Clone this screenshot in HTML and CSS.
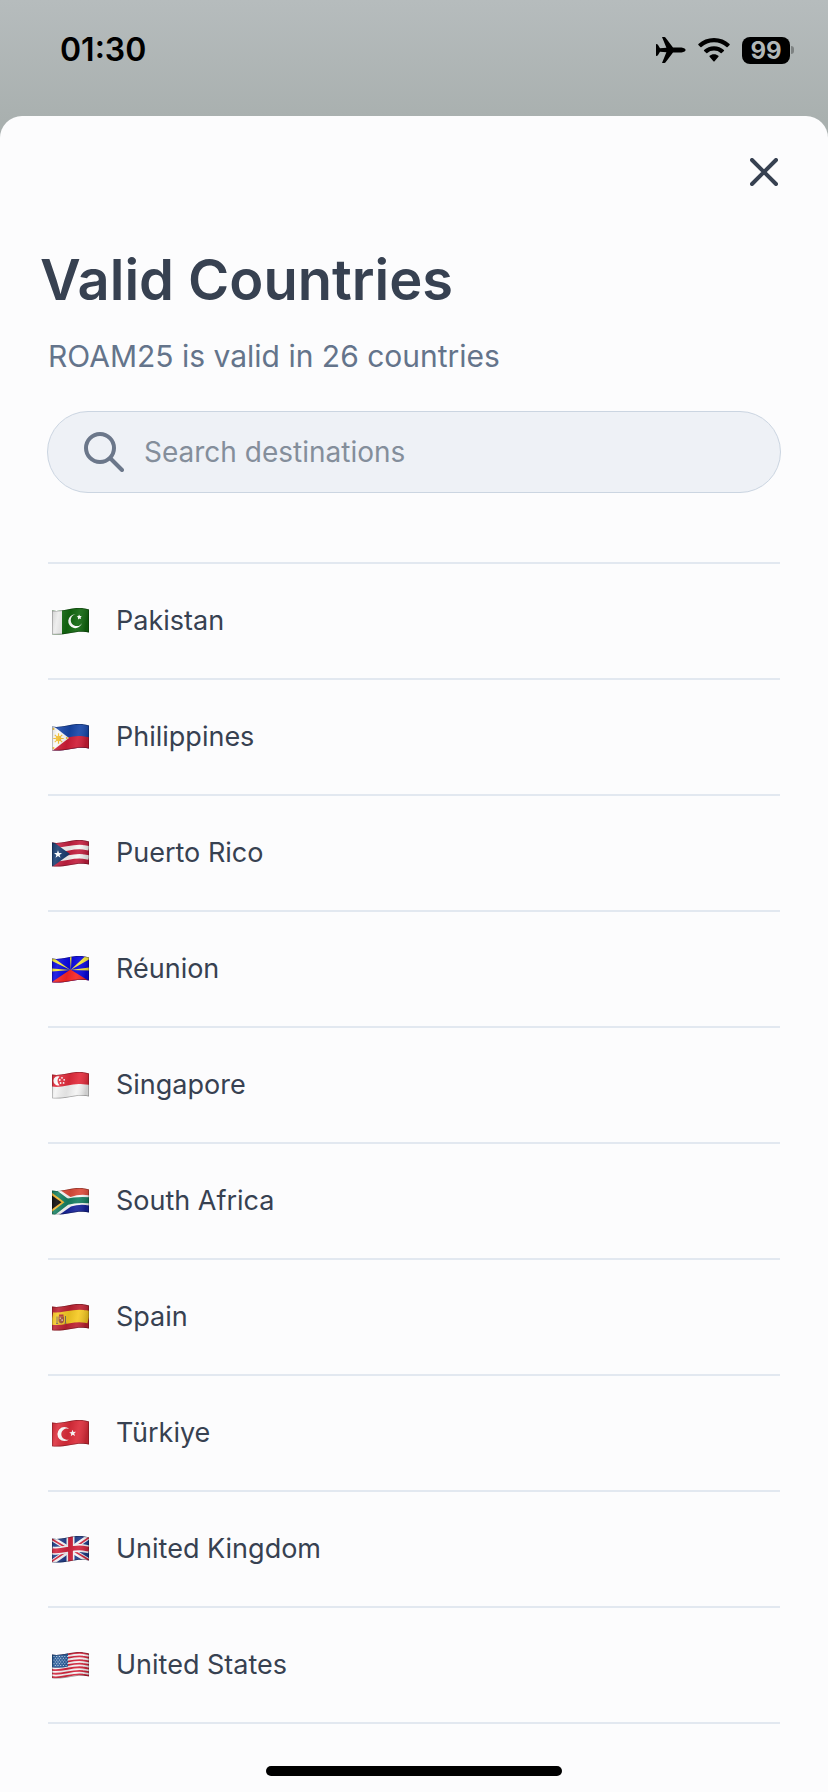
FILE: index.html
```html
<!DOCTYPE html>
<html lang="en">
<head>
<meta charset="utf-8">
<meta name="viewport" content="width=device-width, initial-scale=1">
<title>Valid Countries</title>
<link rel="stylesheet" href="styles.css">
</head>
<body>
<svg class="defs" aria-hidden="true">
  <defs>
    <clipPath id="wave"><path d="M0 2.5C10 4.5 20-1.5 31 .2Q34 .5 37 1.5V24.5Q34 23.8 31 23.7C20 23.5 12 27.5 0 26.3Z"/></clipPath>
    <linearGradient id="shade" x1="0" x2="1" y1="0" y2="0.15">
      <stop offset="0" stop-color="#000" stop-opacity=".12"/>
      <stop offset=".2" stop-color="#fff" stop-opacity=".12"/>
      <stop offset=".5" stop-color="#000" stop-opacity=".08"/>
      <stop offset=".75" stop-color="#fff" stop-opacity=".08"/>
      <stop offset="1" stop-color="#000" stop-opacity=".16"/>
    </linearGradient>
    <g id="finish">
      <path fill="url(#shade)" d="M0 0H37V27H0Z"/>
      <path fill="none" stroke="#000" stroke-opacity=".3" stroke-width="1.4" d="M0 2.5C10 4.5 20-1.5 31 .2Q34 .5 37 1.5V24.5Q34 23.8 31 23.7C20 23.5 12 27.5 0 26.3Z"/>
    </g>
  </defs>
</svg>

<div class="status">
  <time class="clock">01:30</time>
  <div class="indicators">
    <svg class="plane" viewBox="0 0 30 26" aria-label="Airplane mode"><path d="M6 0H8.4Q9.2 0 9.8.9L17 10.5H25.5Q29.6 11.2 29.6 13T25.5 15.5H17L9.8 25.1Q9.2 26 8.4 26H6L10.4 15.3 4 14.8 1.9 18.3Q1.4 19 0 19V7Q1.4 7 1.9 7.7L4 11.2 10.4 10.7Z"/></svg>
    <svg class="wifi" viewBox="0 0 32 24" aria-label="Wi-Fi"><path d="M16 0C22.200 0 27.500 2.300 31.600 6.100Q32 6.600 31.600 7.100L29.600 9.100Q29 9.500 28.500 9.100C25 6 20.900 4.300 16 4.300S7 6 3.500 9.100Q3 9.500 2.400 9.100L.4 7.100Q0 6.600.4 6.100C4.500 2.300 9.800 0 16 0ZM16 8.200C20 8.200 23.300 9.600 25.900 12Q26.400 12.500 25.900 13L23.700 15.100Q23.200 15.500 22.700 15.100C20.800 13.400 18.600 12.600 16 12.600S11.200 13.400 9.300 15.100Q8.800 15.500 8.300 15.100L6.100 13Q5.600 12.500 6.100 12C8.700 9.600 12 8.200 16 8.200ZM16 16.200C17.900 16.200 19.200 16.800 20.400 17.800Q20.900 18.300 20.400 18.800L16.600 23.300Q16 23.900 15.400 23.300L11.600 18.800Q11.100 18.300 11.600 17.800C12.800 16.800 14.100 16.200 16 16.200Z"/></svg>
    <div class="battery"><span class="level">99</span><span class="nub"></span></div>
  </div>
</div>

<main class="sheet">
  <header class="bar">
    <button class="close" type="button" aria-label="Close"><svg viewBox="0 0 28 28"><path d="M2 2 26 26M26 2 2 26"/></svg></button>
  </header>
  <h1 class="title">Valid Countries</h1>
  <div class="content">
    <p class="subtitle">ROAM25 is valid in 26 countries</p>
    <label class="search">
      <svg class="lens" viewBox="0 0 40 40" aria-hidden="true"><circle cx="16" cy="16" r="14"/><path d="M26.500 26.500 38 38"/></svg>
      <input class="field" type="search" placeholder="Search destinations" aria-label="Search destinations">
    </label>
    <ul class="countries">
      <li class="country"><svg class="flag" viewBox="0 0 37 27" aria-hidden="true"><g clip-path="url(#wave)"><path fill="#11670f" d="M0 0H37V27H0Z"/><path fill="#ececec" d="M0 0H10V27H0Z"/><path fill="#fff" d="M23.500 6.200A7 7 0 1 0 30 15A6 6 0 1 1 23.500 6.200Z"/><path fill="#fff" d="M27 6.500 27.900 8.100 29.700 8 28.600 9.400 29.100 11.100 27.500 10.400 26 11.400 26.100 9.600 24.700 8.500 26.500 8.100Z"/><use href="#finish"/></g></svg><span>Pakistan</span></li>
      <li class="country"><svg class="flag" viewBox="0 0 37 27" aria-hidden="true"><g clip-path="url(#wave)"><path fill="#1746a8" d="M0 0H37V27H0Z"/><path fill="#d01c36" d="M0 14.500C10 16.500 20 10.500 31 12.200L37 13.200V27H0Z"/><path fill="#fafafa" d="M0 1 17 14 0 27Z"/><g stroke="#f2bd2c" stroke-width="1.200"><path d="M6.500 9.300V19.700M1.300 14.500H11.700M2.800 10.800 10.200 18.200M10.200 10.800 2.800 18.200"/></g><circle cx="6.500" cy="14.500" r="2.800" fill="#f2bd2c"/><circle cx="1.500" cy="5" r="1" fill="#f2bd2c"/><circle cx="1.500" cy="24" r="1" fill="#f2bd2c"/><circle cx="14.800" cy="14" r="1" fill="#f2bd2c"/><use href="#finish"/></g></svg><span>Philippines</span></li>
      <li class="country"><svg class="flag" viewBox="0 0 37 27" aria-hidden="true"><g clip-path="url(#wave)"><path fill="#c31f3f" d="M0 0H37V27H0Z"/><g fill="none" stroke="#f7f5f5" stroke-width="4.600"><path d="M0 9.500C10 11.500 20 5.500 31 7.200Q34 7.500 37 8.300"/><path d="M0 18.800C10 20.800 20 14.800 31 16.500Q34 16.800 37 17.600"/></g><path fill="#173c70" d="M0 1 18 14 0 27Z"/><path fill="#fff" d="M6 10.200 7 13.100H10L7.600 14.900 8.500 17.800 6 16.100 3.500 17.800 4.400 14.900 2 13.100H5Z"/><use href="#finish"/></g></svg><span>Puerto Rico</span></li>
      <li class="country"><svg class="flag" viewBox="0 0 37 27" aria-hidden="true"><g clip-path="url(#wave)"><path fill="#0a08e0" d="M0 0H37V27H0Z"/><path fill="#f5e63a" d="M17.800 0H19.600L18.900 14ZM0 2 2.500 2.400 18.500 14 0 5ZM0 12.500 18.500 14 0 15.500ZM37 0V3.500L18.500 14 33.500 0ZM37 11.500V14.500L18.500 14Z"/><path fill="#fa2525" d="M18.500 13.500 37 25V27H0V26Z"/><use href="#finish"/></g></svg><span>Réunion</span></li>
      <li class="country"><svg class="flag" viewBox="0 0 37 27" aria-hidden="true"><g clip-path="url(#wave)"><path fill="#f4f4f4" d="M0 0H37V27H0Z"/><path fill="#e32c3c" d="M0 0H37V12.800Q34 12.500 31 12.200C20 10.500 10 16.500 0 14.500Z"/><path fill="#fff" d="M7.500 4.500A4.600 4.600 0 1 0 7.500 13.200A5.600 5.600 0 0 1 7.500 4.500Z"/><g fill="#fff"><circle cx="10" cy="5.800" r=".9"/><circle cx="7.800" cy="8" r=".9"/><circle cx="12.200" cy="7.800" r=".9"/><circle cx="8.600" cy="11" r=".9"/><circle cx="11.600" cy="10.900" r=".9"/></g><use href="#finish"/></g></svg><span>Singapore</span></li>
      <li class="country"><svg class="flag" viewBox="0 0 37 27" aria-hidden="true"><g clip-path="url(#wave)"><path fill="#fafafa" d="M0 0H37V27H0Z"/><path fill="#dd4b3a" d="M5 0H37V7.300Q28 5.500 18.500 9Z"/><path fill="#17249b" d="M7 27 19 18.500Q28 15.500 37 17.500V27Z"/><path fill="none" stroke="#168062" stroke-width="6" d="M-2 1 15 13.800-2 27M14 14Q25 11 38 12.300"/><path fill="#f3b62f" d="M0 4.800 12.500 14.200 0 23.800Z"/><path fill="#080808" d="M0 7.500 9.500 14.200 0 21.200Z"/><use href="#finish"/></g></svg><span>South Africa</span></li>
      <li class="country"><svg class="flag" viewBox="0 0 37 27" aria-hidden="true"><g clip-path="url(#wave)"><path fill="#bd2231" d="M0 0H37V27H0Z"/><path fill="none" stroke="#f6ca23" stroke-width="12.500" d="M0 14.500C10 16.500 20 10.500 31 12.200Q34 12.500 37 13.300"/><path fill="#a5553c" d="M6.500 12.500H12V17Q11.500 19 9.200 19.500Q7 19 6.500 17Z"/><path fill="#b6313b" d="M7 10.500H11.500V12.500H7Z"/><path fill="none" stroke="#7e6b55" d="M5 12.500V19.500M13.500 12V19.200M4 19.500H6.200M12.500 19.300H14.500"/><path fill="#dfb3a2" d="M7.600 13.500H9V15H7.600ZM9.400 15.200H11V17H9.400Z"/><use href="#finish"/></g></svg><span>Spain</span></li>
      <li class="country"><svg class="flag" viewBox="0 0 37 27" aria-hidden="true"><g clip-path="url(#wave)"><path fill="#dc2c3a" d="M0 0H37V27H0Z"/><path fill="#fff" d="M17.200 9A7 7 0 1 0 17.200 19.200A5.600 5.600 0 1 1 17.200 9Z"/><path fill="#fff" d="M20.400 9.700 21.500 12 24 11.800 22.200 13.500 23 16 20.800 14.800 18.800 16.300 19.200 13.800 17.200 12.500 19.700 12.100Z"/><use href="#finish"/></g></svg><span>Türkiye</span></li>
      <li class="country"><svg class="flag" viewBox="0 0 37 27" aria-hidden="true"><g clip-path="url(#wave)"><path fill="#1f3c88" d="M0 0H37V27H0Z"/><path stroke="#f5f5f7" stroke-width="5" d="M-1 2 38 25.500M-1 27 38 0"/><path stroke="#d2233c" stroke-width="1.700" d="M-1 2.700 18 14M38 24.500 19 13.200M-1 26 18 13M38 .8 19 14"/><path fill="none" stroke="#f5f5f7" stroke-width="8" d="M18.500 0V27M0 14.500C10 16.500 20 10.500 31 12.200L37 13.200"/><path fill="none" stroke="#d2233c" stroke-width="4.800" d="M18.500 0V27M0 14.500C10 16.500 20 10.500 31 12.200L37 13.200"/><use href="#finish"/></g></svg><span>United Kingdom</span></li>
      <li class="country"><svg class="flag" viewBox="0 0 37 27" aria-hidden="true"><g clip-path="url(#wave)"><path fill="#f7f5f6" d="M0 0H37V27H0Z"/><g fill="none" stroke="#d4243b" stroke-width="1.800"><path d="M0 3.400C10 5.400 20-.6 31 1.100Q34 1.400 37 2.200"/><path d="M0 7C10 9 20 3 31 4.700Q34 5 37 5.800"/><path d="M0 10.600C10 12.600 20 6.600 31 8.300Q34 8.600 37 9.400"/><path d="M0 14.200C10 16.200 20 10.200 31 11.900Q34 12.200 37 13"/><path d="M0 17.800C10 19.800 20 13.800 31 15.500Q34 15.800 37 16.600"/><path d="M0 21.400C10 23.400 20 17.400 31 19.100Q34 19.400 37 20.200"/><path d="M0 25C10 27 20 21 31 22.700Q34 23 37 23.800"/></g><path fill="#245897" d="M0 0H16V14.500Q8 16.500 0 15.200Z"/><path fill="none" stroke="#c9d8ea" stroke-width="1" stroke-dasharray="1 1.700" d="M1.500 4.500H16M2.800 6.300H16M1.500 8.100H16M2.800 9.900H16M1.500 11.700H16M2.800 13.500H16"/><use href="#finish"/></g></svg><span>United States</span></li>
    </ul>
  </div>
  <div class="home"></div>
</main>
</body>
</html>
```
FILE: styles.css
```css
* { box-sizing: border-box; }

body {
  margin: 0;
  min-height: 100vh;
  display: flex;
  flex-direction: column;
  background: linear-gradient(#b6bcbd, #a9b0af 120px);
  color: #374151;
  font-family: Inter, "Liberation Sans", sans-serif;
}

.defs { position: absolute; width: 0; height: 0; }

.status {
  display: flex;
  justify-content: space-between;
  align-items: flex-start;
  height: 116px;
  padding: 30px 34px 0 60px;
  color: #000;
}

.clock { font-size: 32px; line-height: 40px; font-weight: 600; }

.indicators { display: flex; align-items: center; gap: 12px; height: 40px; }
.plane { width: 30px; height: 26px; }
.wifi { width: 32px; height: 24px; }
.battery { display: flex; align-items: center; gap: 1px; }

.level {
  width: 48px;
  border-radius: 8px;
  background: #000;
  color: #b1b7b7;
  font-size: 24px;
  line-height: 27px;
  font-weight: 700;
  text-align: center;
}

.nub { width: 3px; height: 8px; border-radius: 0 4px 4px 0; background: #7d8282; }

.sheet {
  flex: 1;
  display: flex;
  flex-direction: column;
  padding-top: 28px;
  border-radius: 22px 22px 0 0;
  background: #fcfcfd;
}

.bar { display: flex; justify-content: flex-end; padding: 0 36px; }

.close {
  width: 56px;
  height: 56px;
  padding: 14px;
  border: 0;
  background: none;
}

.close svg { display: block; width: 28px; height: 28px; fill: none; stroke: #374151; stroke-width: 4; stroke-linecap: round; }

.title { margin: 44px 40px 0; font-size: 56px; line-height: 72px; font-weight: 600; }

.content { padding: 0 48px; }

.subtitle { margin: 20px 0 0; color: #64748b; font-size: 30px; line-height: 40px; }

.search {
  display: flex;
  align-items: center;
  gap: 20px;
  height: 82px;
  margin: 35px -1px 0;
  padding: 0 36px;
  border: 1px solid #cbd5e1;
  border-radius: 41px;
  background: #eef1f6;
}

.lens { flex: none; width: 40px; height: 40px; fill: none; stroke: #6b778a; stroke-width: 4; stroke-linecap: round; }

.field {
  flex: 1;
  min-width: 0;
  padding: 0;
  border: 0;
  outline: 0;
  background: none;
  color: #374151;
  font: inherit;
  font-size: 28px;
  line-height: 40px;
}

.field::placeholder { color: #848e9b; opacity: 1; }

.countries { margin: 69px 0 0; padding: 0; border-top: 2px solid #e2e8f0; list-style: none; }

.country {
  display: flex;
  align-items: center;
  gap: 27px;
  height: 116px;
  padding-left: 4px;
  border-bottom: 2px solid #e2e8f0;
  font-size: 27px;
  line-height: 40px;
}

.flag { flex: none; width: 37px; height: 27px; }

.home { align-self: center; width: 296px; max-width: 50%; height: 10px; margin: 42px 0 16px; border-radius: 5px; background: #000; }
```
